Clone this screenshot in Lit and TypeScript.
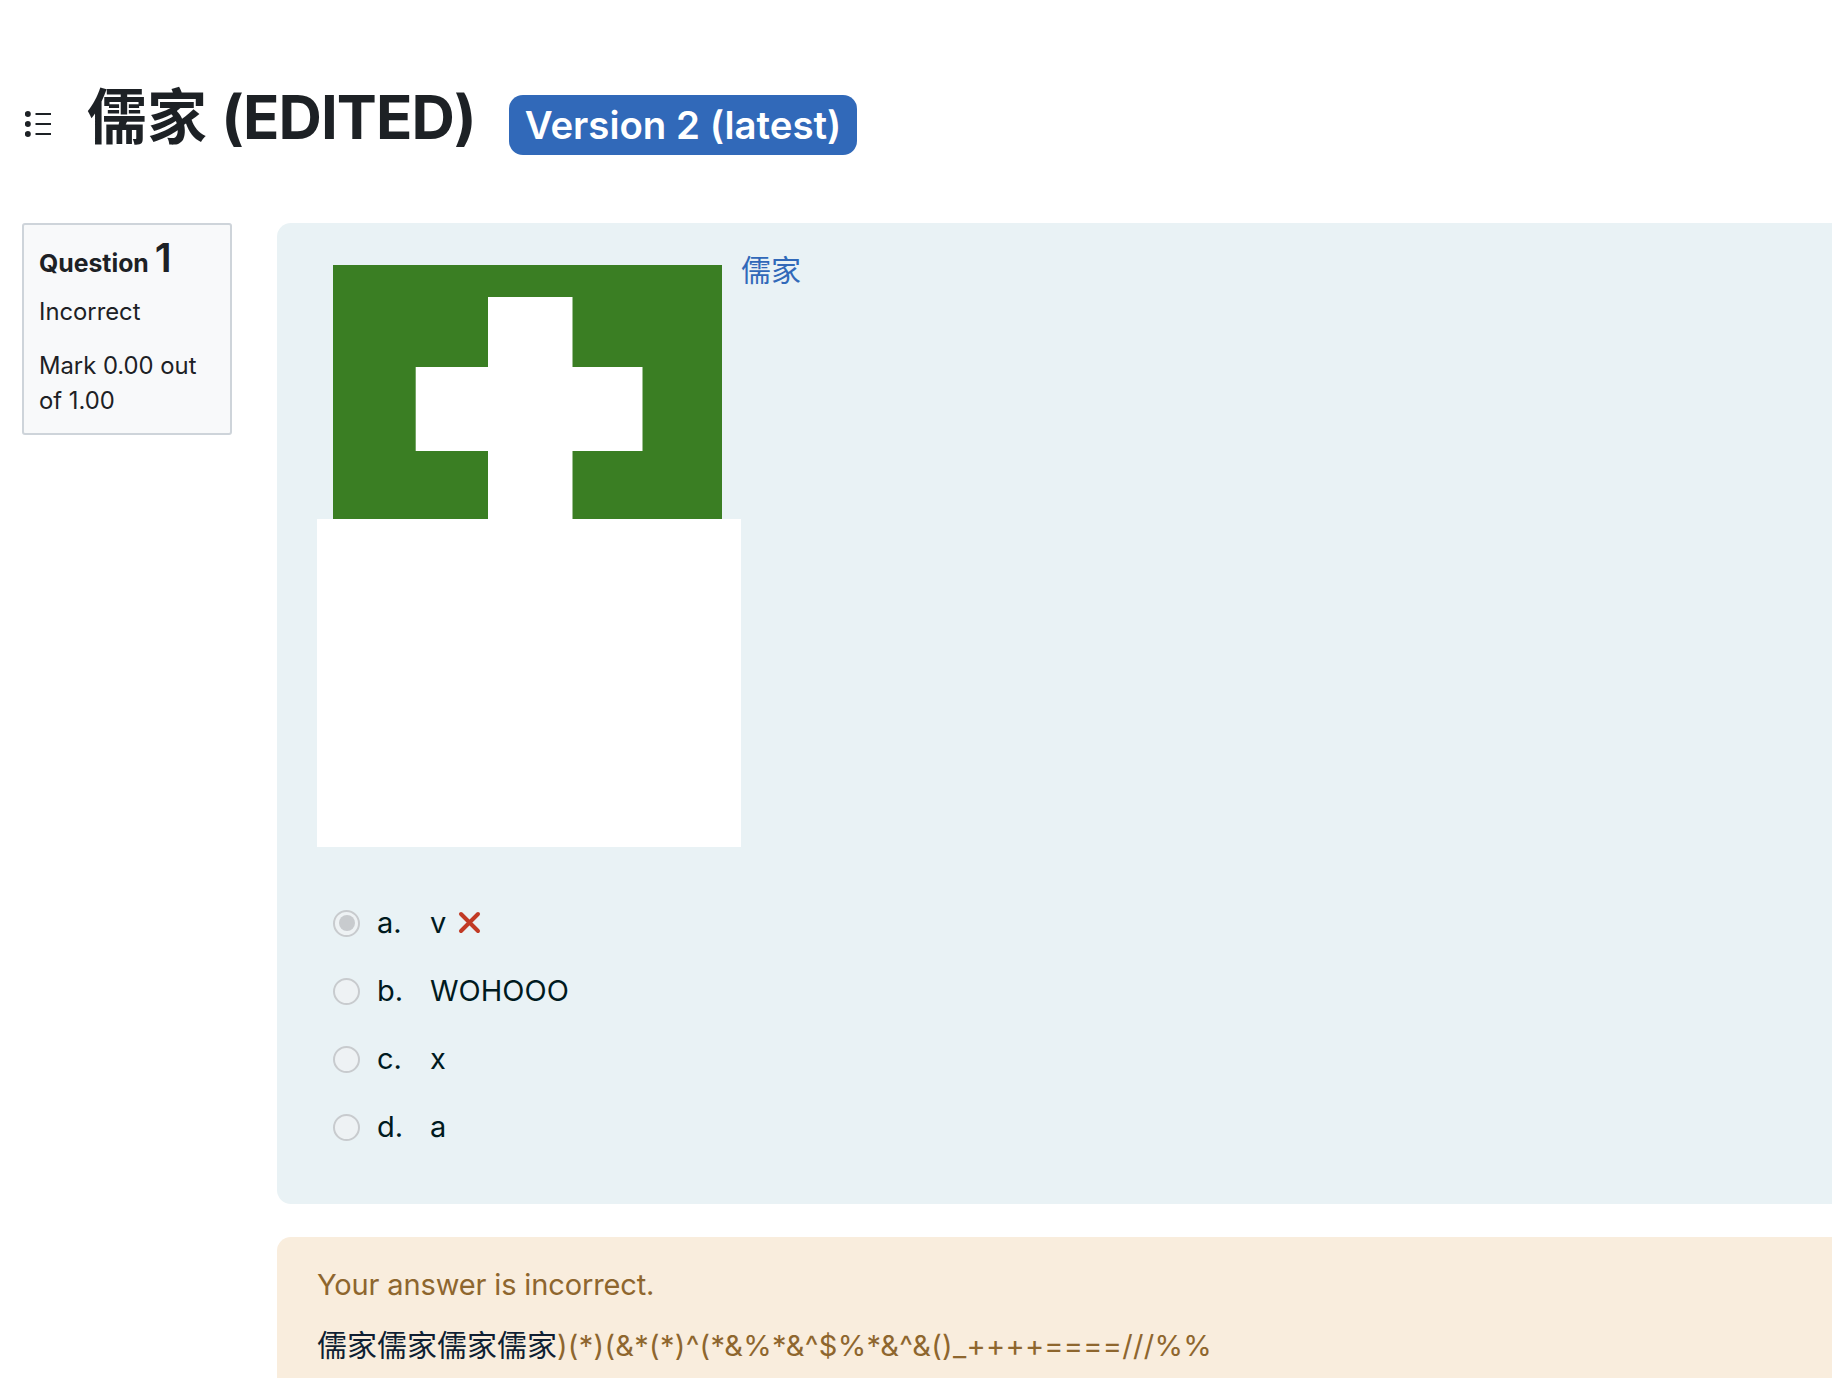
import { LitElement, html, css } from "lit";
import { customElement } from "lit/decorators.js";

@customElement("app-root")
export class AppRoot extends LitElement {
  static styles = css`
    :host { display: block; width: 1832px; height: 1378px; overflow: hidden; background: #fff; font-family: Inter, "Noto Sans CJK SC", sans-serif; color: #1d2125; }
    .header { display: flex; align-items: center; height: 223px; box-sizing: border-box; padding: 85px 0 64px 25px; }
    .menu { width: 28px; height: 28px; flex: none; margin-right: 34px; margin-top: 3px; }
    h1 { margin: 0; font-size: 60px; font-weight: 700; line-height: 72px; white-space: nowrap; margin-top: -11px; }
    h1 span { letter-spacing: -0.9px; }
    .badge { margin-left: 33px; background: #3169b9; color: #fff; font-size: 38.4px; font-weight: 600; line-height: 60px; height: 60px; padding: 0 16px; border-radius: 14px; white-space: nowrap; margin-top: 5px; }
    .main { display: flex; align-items: flex-start; padding-left: 22px; gap: 45px; }
    .info { width: 210px; height: 211.500px; box-sizing: border-box; flex: none; background: #f8f9fa; border: 2px solid #ced4da; border-radius: 3px; padding: 13px 15px; font-size: 23.800px; line-height: 35.500px; }
    .qno { font-weight: 700; font-size: 24.800px; line-height: 40px; white-space: nowrap; margin-bottom: 11px; }
    .qno b { font-size: 40px; font-weight: 600; }
    .info p { margin: 0 0 18px; }
    .right { flex: none; width: 1700px; }
    .panel { background: #e9f2f5; border-radius: 14px; height: 981px; box-sizing: border-box; padding: 0 40px; color: #001a1e; }
    .stem { display: flex; align-items: flex-start; }
    .pic { width: 424px; flex: none; padding-top: 42px; }
    .pic svg { display: block; }
    .pic g { filter: blur(0.5px); }
    .blank { background: #fff; height: 328px; }
    a { color: #3169b9; text-decoration: none; font-size: 30px; line-height: 48px; margin-top: 23px; }
    .opts { display: flex; flex-direction: column; gap: 24px; margin-top: 54px; padding-left: 16px; font-size: 29px; line-height: 44px; }
    .opt { display: flex; align-items: center; }
    .radio { width: 27px; height: 27px; box-sizing: border-box; border: 2px solid #c8cbce; border-radius: 50%; background: #eef2f4; flex: none; display: flex; align-items: center; justify-content: center; margin-right: 17px; }
    .radio i { display: block; width: 16px; height: 16px; border-radius: 50%; background: #c8cbce; }
    .letter { width: 53px; }
    .x { margin: -2px 0 0 12px; display: block; }
    .fb { margin-top: 33px; background: #f9eddd; color: #8e662e; border-radius: 14px; padding: 26px 40px; height: 300px; box-sizing: border-box; font-size: 29px; line-height: 44px; }
    .fb p { margin: 0 0 16px; white-space: nowrap; }
    .fb .l1 { letter-spacing: -0.14px; }
    .fb .l2 { letter-spacing: 0.29px; }
    .fb span { color: #0f1f33; font-size: 30px; letter-spacing: 0; }
  `;

  render() {
    const opts = ["WOHOOO", "x", "a"];
    const letters = ["b.", "c.", "d."];
    return html`
      <div class="header">
        <svg class="menu" viewBox="0 0 28 28">
          <circle cx="2.800" cy="4" r="3" fill="#1d2125"></circle>
          <circle cx="2.800" cy="14" r="3" fill="#1d2125"></circle>
          <circle cx="2.800" cy="24" r="3" fill="#1d2125"></circle>
          <path d="M10.500 4H26M10.500 14H26M10.500 24H26" stroke="#1d2125" stroke-width="2"></path>
        </svg>
        <h1>儒家 <span>(EDITED)</span></h1>
        <span class="badge">Version 2 (latest)</span>
      </div>
      <div class="main">
        <div class="info">
          <div class="qno">Question <b>1</b></div>
          <p>Incorrect</p>
          <p>Mark 0.00 out of 1.00</p>
        </div>
        <div class="right">
          <div class="panel">
            <div class="stem">
              <div class="pic">
                <svg width="424" height="254" viewBox="0 0 424 254">
                  <g>
                    <rect x="16" y="0" width="389" height="270" fill="#3a7e23"></rect>
                    <path d="M171 32H255.500V102H325.500V186H255.500V270H171V186H98.700V102H171Z" fill="#fff"></path>
                  </g>
                </svg>
                <div class="blank"></div>
              </div>
              <a href="#">儒家</a>
            </div>
            <div class="opts">
              <div class="opt">
                <span class="radio"><i></i></span><span class="letter">a.</span><span>v</span>
                <svg class="x" width="23" height="23" viewBox="0 0 23 23"><path d="M3 3L20 20M20 3L3 20" stroke="#c13a25" stroke-width="4" stroke-linecap="round"></path></svg>
              </div>
              ${opts.map((t, i) => html`<div class="opt"><span class="radio"></span><span class="letter">${letters[i]}</span><span>${t}</span></div>`)}
            </div>
          </div>
          <div class="fb">
            <p class="l1">Your answer is incorrect.</p>
            <p class="l2"><span>儒家儒家儒家儒家</span>)(*)(&*(*)^(*&%*&^$%*&^&()_++++====///%%</p>
          </div>
        </div>
      </div>
    `;
  }
}
